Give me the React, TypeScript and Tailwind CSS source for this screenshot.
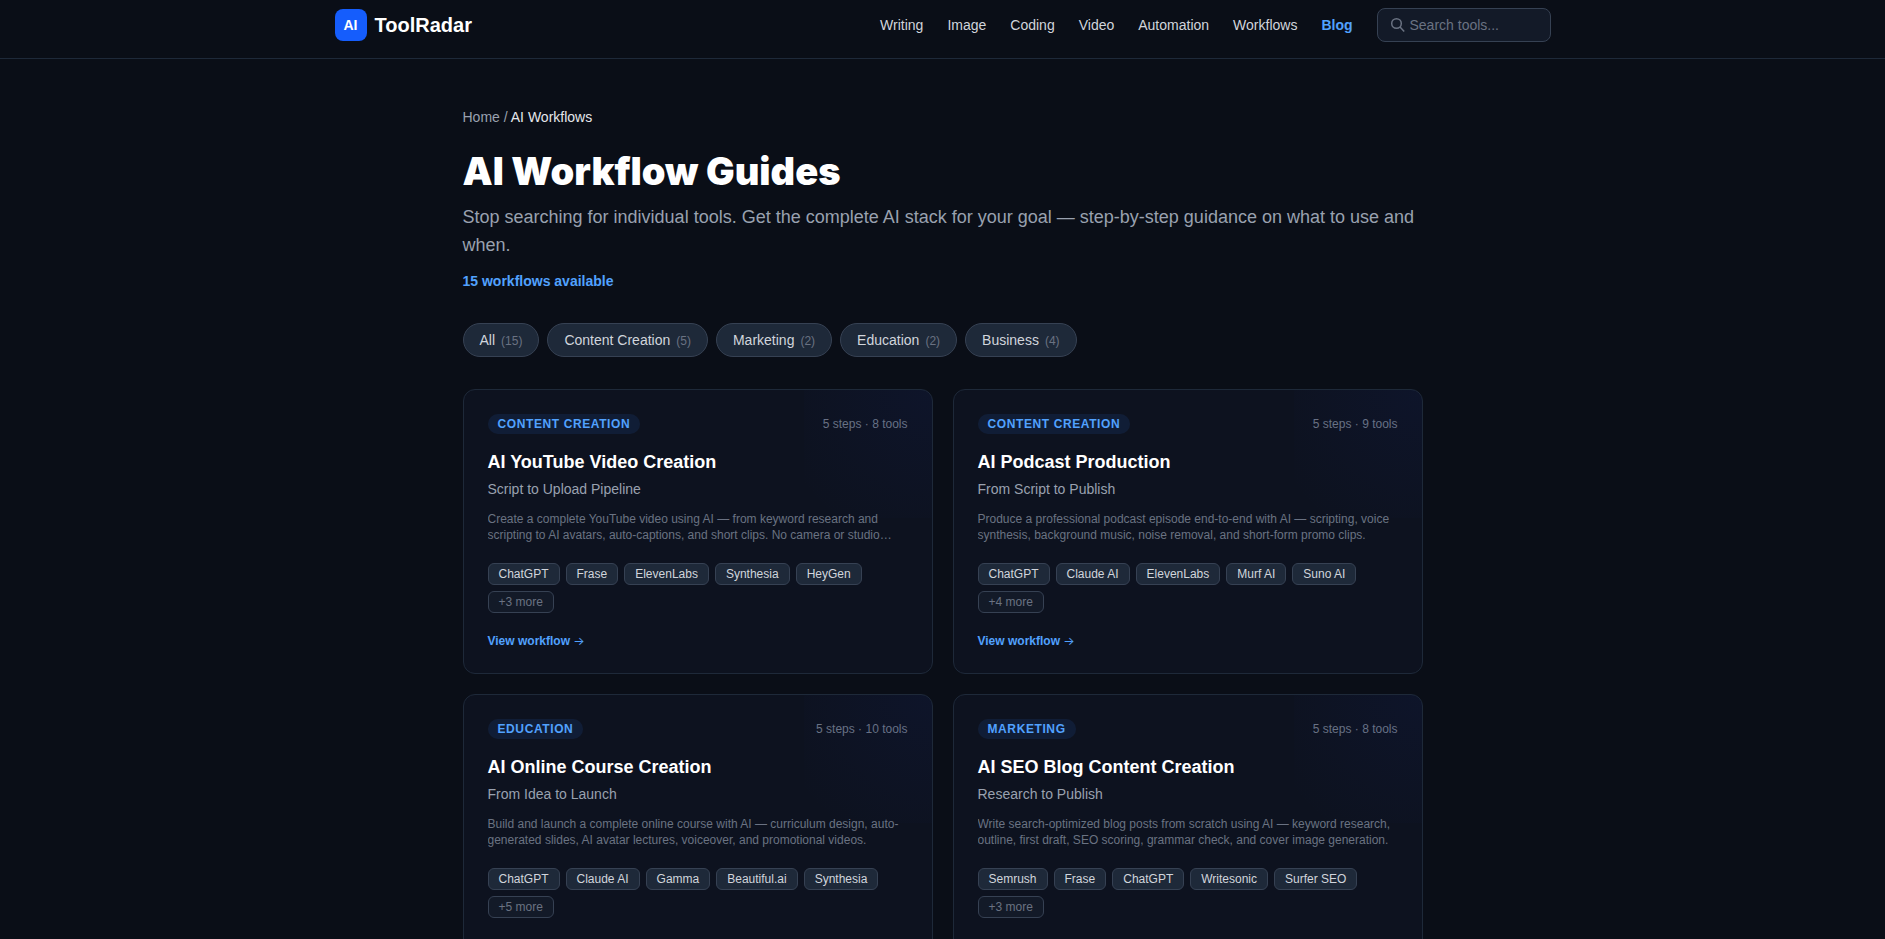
import { useState } from "react";

type Workflow = {
  slug: string;
  category: string;
  steps: number;
  tools: number;
  title: string;
  subtitle: string;
  description: string;
  topTools: string[];
};

const WORKFLOWS: Workflow[] = [
  {
    slug: "youtube-video-creation",
    category: "Content Creation",
    steps: 5,
    tools: 8,
    title: "AI YouTube Video Creation",
    subtitle: "Script to Upload Pipeline",
    description:
      "Create a complete YouTube video using AI — from keyword research and scripting to AI avatars, auto-captions, and short clips. No camera or studio…",
    topTools: ["ChatGPT", "Frase", "ElevenLabs", "Synthesia", "HeyGen"],
  },
  {
    slug: "podcast-production",
    category: "Content Creation",
    steps: 5,
    tools: 9,
    title: "AI Podcast Production",
    subtitle: "From Script to Publish",
    description:
      "Produce a professional podcast episode end-to-end with AI — scripting, voice synthesis, background music, noise removal, and short-form promo clips.",
    topTools: ["ChatGPT", "Claude AI", "ElevenLabs", "Murf AI", "Suno AI"],
  },
  {
    slug: "online-course-creation",
    category: "Education",
    steps: 5,
    tools: 10,
    title: "AI Online Course Creation",
    subtitle: "From Idea to Launch",
    description:
      "Build and launch a complete online course with AI — curriculum design, auto-generated slides, AI avatar lectures, voiceover, and promotional videos.",
    topTools: ["ChatGPT", "Claude AI", "Gamma", "Beautiful.ai", "Synthesia"],
  },
  {
    slug: "seo-blog-content",
    category: "Marketing",
    steps: 5,
    tools: 8,
    title: "AI SEO Blog Content Creation",
    subtitle: "Research to Publish",
    description:
      "Write search-optimized blog posts from scratch using AI — keyword research, outline, first draft, SEO scoring, grammar check, and cover image generation.",
    topTools: ["Semrush", "Frase", "ChatGPT", "Writesonic", "Surfer SEO"],
  },
];

const FILTERS = [
  { name: "All", count: 15 },
  { name: "Content Creation", count: 5 },
  { name: "Marketing", count: 2 },
  { name: "Education", count: 2 },
  { name: "Business", count: 4 },
];

const NAV = ["Writing", "Image", "Coding", "Video", "Automation", "Workflows"];

function Header() {
  return (
    <header className="border-b border-gray-800">
      <div className="max-w-7xl mx-auto px-8 pt-2 pb-4 flex items-center justify-between">
        <a href="#" className="flex items-center gap-2">
          <span className="w-8 h-8 rounded-lg bg-blue-600 flex items-center justify-center text-sm font-bold">AI</span>
          <span className="text-xl leading-8 font-bold">ToolRadar</span>
        </a>
        <nav className="flex items-center gap-6 text-sm text-gray-300">
          {NAV.map((item) => (
            <a key={item} href="#" className="hover:text-white">{item}</a>
          ))}
          <a href="#" className="font-semibold text-blue-400">Blog</a>
          <label className="flex items-center gap-1 w-[174px] px-3 py-1.5 rounded-lg border border-gray-700 bg-[#131a28] text-gray-500">
            <svg className="w-4 h-4 shrink-0" viewBox="0 0 16 16" fill="none" stroke="currentColor" strokeWidth="1.5">
              <circle cx="6.5" cy="6.5" r="4.8" />
              <path d="M10 10l4.2 4.4" />
            </svg>
            <input
              type="text"
              aria-label="Search tools"
              placeholder="Search tools..."
              className="w-full min-w-0 bg-transparent placeholder-gray-500 focus:outline-none"
            />
          </label>
        </nav>
      </div>
    </header>
  );
}

function WorkflowCard({ workflow }: { workflow: Workflow }) {
  return (
    <article className="relative overflow-hidden rounded-xl border border-gray-800 bg-[#0d121f] p-6">
      {/* Corner glow */}
      <div className="absolute top-0 right-0 w-32 h-32 bg-[radial-gradient(circle_at_top_right,rgba(30,60,220,0.06),transparent_90%)]" />
      <div className="flex items-center justify-between mb-4">
        <span className="rounded-full bg-blue-500/10 px-2.5 py-0.5 text-xs font-semibold uppercase tracking-wider text-blue-400">
          {workflow.category}
        </span>
        <span className="text-xs text-gray-500">{workflow.steps} steps · {workflow.tools} tools</span>
      </div>
      <h2 className="text-lg leading-[25px] font-bold mb-1">{workflow.title}</h2>
      <p className="text-sm text-gray-400 mb-3">{workflow.subtitle}</p>
      <p className="text-xs text-gray-500 mb-5 line-clamp-2">{workflow.description}</p>
      <div className="flex flex-wrap gap-1.5 mb-5">
        {workflow.topTools.map((tool) => (
          <span key={tool} className="rounded-md border border-gray-700 bg-gray-800 px-2.5 py-0.5 text-xs text-gray-300">
            {tool}
          </span>
        ))}
        <span className="rounded-md border border-gray-700 bg-[#131a28] px-2.5 py-0.5 text-xs text-gray-500">
          +{workflow.tools - workflow.topTools.length} more
        </span>
      </div>
      <a href={`#${workflow.slug}`} className="block text-xs font-semibold text-blue-400">
        View workflow <span className="font-[Inter] font-normal">→</span>
      </a>
    </article>
  );
}

export default function App() {
  const [category, setCategory] = useState("All");
  const visible = WORKFLOWS.filter((w) => category === "All" || w.category === category);

  return (
    <div className="min-h-screen bg-[#0a0e17] text-white font-['Liberation_Sans',Arial,sans-serif]">
      <Header />
      <main className="max-w-5xl mx-auto px-8 py-12">
        <nav aria-label="Breadcrumb" className="text-sm text-gray-400 mb-6">
          <a href="#" className="hover:text-white">Home</a> / <span className="text-gray-200">AI Workflows</span>
        </nav>

        <h1 className="font-['Arial_Black',Inter,sans-serif] text-[38px] leading-10 font-black mb-3">AI Workflow Guides</h1>
        <p className="text-lg leading-7 text-gray-400 mb-3">
          Stop searching for individual tools. Get the complete AI stack for your goal — step-by-step guidance on what to use and when.
        </p>
        <p className="text-sm font-semibold text-blue-400 mb-8">15 workflows available</p>

        <div className="flex flex-wrap gap-2 mb-8">
          {FILTERS.map((filter) => (
            <button
              key={filter.name}
              onClick={() => setCategory(filter.name)}
              className="rounded-full border border-gray-700 bg-gray-800 px-4 py-1.5 text-sm text-gray-300 hover:text-white"
            >
              {filter.name}
              <span className="ml-1.5 text-xs text-gray-500">({filter.count})</span>
            </button>
          ))}
        </div>

        <div className="grid grid-cols-1 md:grid-cols-2 gap-5">
          {visible.map((workflow) => (
            <WorkflowCard key={workflow.slug} workflow={workflow} />
          ))}
        </div>
      </main>
    </div>
  );
}
